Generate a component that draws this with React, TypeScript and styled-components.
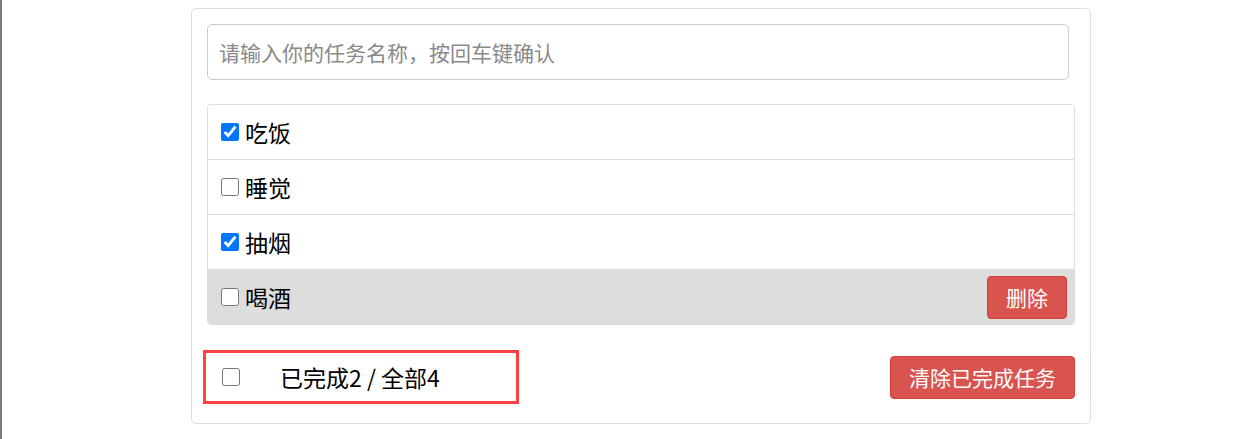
import React from "react";
import styled, { createGlobalStyle } from "styled-components";

const Global = createGlobalStyle`
  html, body { margin: 0; padding: 0; background: #fff; }
  body { font-family: "Noto Sans CJK SC", "Noto Sans", sans-serif; color: #000; }
  * { box-sizing: border-box; }
`;

const Page = styled.div`
  display: flex;
  min-height: 439px;
`;

const Strip = styled.div`
  width: 2px;
  background: #7a7a7a;
  flex-shrink: 0;
`;

const Card = styled.div`
  margin: 8px 0 15px 189px;
  width: 900px;
  border: 1px solid #ddd;
  border-radius: 5px;
  padding: 15px 15px 19px 15px;
  display: flex;
  flex-direction: column;
`;

const Input = styled.input`
  width: 862px;
  height: 56px;
  border: 1px solid #ccc;
  border-radius: 5px;
  padding: 0 11px;
  font-family: inherit;
  font-size: 21px;
  outline: none;
  &::placeholder { color: #8a8a8a; }
`;

const List = styled.ul`
  list-style: none;
  margin: 24px 0 0 0;
  padding: 0;
  border: 1px solid #ddd;
  border-radius: 4px;
  overflow: hidden;
`;

const Row = styled.li<{ $hover?: boolean }>`
  height: 55px;
  display: flex;
  align-items: center;
  padding: 0 7px 0 13px;
  border-bottom: 1px solid #ddd;
  background: ${(p) => (p.$hover ? "#ddd" : "#fff")};
  &:last-child { border-bottom: none; height: 54px; }
`;

const Check = styled.input.attrs({ type: "checkbox" })`
  width: 18px;
  height: 18px;
  margin: 0 6px 0 0;
  accent-color: #0075ff;
`;

const ItemText = styled.span`
  font-size: 23px;
  flex: 1;
`;

const DangerButton = styled.button<{ $w: number; $fs: number }>`
  width: ${(p) => p.$w}px;
  height: 43px;
  background: #d9534f;
  border: 1px solid #d43f3a;
  border-radius: 4px;
  color: #fff;
  font-family: inherit;
  font-size: ${(p) => p.$fs}px;
  padding: 0;
`;

const Footer = styled.div`
  margin-top: 25px;
  height: 54px;
  display: flex;
  align-items: center;
  justify-content: space-between;
`;

const Summary = styled.label`
  margin-left: -4px;
  width: 316px;
  height: 54px;
  border: 3px solid #fd4040;
  display: flex;
  align-items: center;
  padding-left: 16px;
  font-size: 23px;
  gap: 40px;
  & > input { margin: 0; }
`;

const items = [
  { name: "吃饭", done: true },
  { name: "睡觉", done: false },
  { name: "抽烟", done: true },
  { name: "喝酒", done: false },
];

export default function App() {
  return (
    <>
      <Global />
      <Page>
        <Strip />
        <Card>
          <Input placeholder="请输入你的任务名称，按回车键确认" />
          <List>
            {items.map((it, i) => (
              <Row key={it.name} $hover={i === 3}>
                <Check defaultChecked={it.done} />
                <ItemText>{it.name}</ItemText>
                {i === 3 && (
                  <DangerButton $w={80} $fs={21}>
                    删除
                  </DangerButton>
                )}
              </Row>
            ))}
          </List>
          <Footer>
            <Summary>
              <Check />
              <span>已完成2 / 全部4</span>
            </Summary>
            <DangerButton $w={185} $fs={21}>
              清除已完成任务
            </DangerButton>
          </Footer>
        </Card>
      </Page>
    </>
  );
}
